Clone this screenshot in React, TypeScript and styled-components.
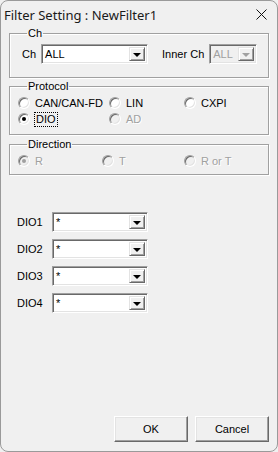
import React from "react";
import styled, { createGlobalStyle, css } from "styled-components";

const Global = createGlobalStyle`
  html, body { margin: 0; padding: 0; background: #f0f0f0; }
  body { font-family: "Liberation Sans", Arial, sans-serif; font-size: 11px; color: #000; }
  * { box-sizing: border-box; }
`;

const Window = styled.div`
  width: 278px;
  height: 452px;
  border: 1px solid #9a9a9a;
  border-radius: 8px;
  background: #f0f0f0;
  display: flex;
  flex-direction: column;
  overflow: hidden;
`;

const TitleBar = styled.div`
  height: 26px;
  display: flex;
  align-items: center;
  justify-content: space-between;
  padding: 0 6px 0 3px;
  flex: none;
`;

const Title = styled.span`
  font-family: "Noto Sans", "Open Sans", sans-serif;
  font-size: 13px;
  color: #1a1a1a;
  padding-top: 2px;
`;

const CloseBtn = styled.span`
  display: flex;
  width: 20px;
  justify-content: center;
`;

const Body = styled.div`
  flex: 1;
  display: flex;
  flex-direction: column;
  padding: 0 8px;
`;

const Group = styled.fieldset<{ $mt: number; $pt: number; $pb: number }>`
  margin: ${(p) => p.$mt}px 0 0 0;
  padding: ${(p) => p.$pt}px 8px ${(p) => p.$pb}px 12px;
  border: 1px solid #a0a0a0;
  box-shadow: inset 1px 1px 0 #fff, 1px 1px 0 #fff;
  min-width: 0;
`;

const Legend = styled.legend`
  padding: 0 1px;
  margin-left: 5px;
  line-height: 12px;
  font-size: 11px;
`;

const Row = styled.div`
  display: flex;
  align-items: center;
`;

const Label = styled.span<{ $w?: number; $ml?: number }>`
  ${(p) => p.$w && css`width: ${p.$w}px;`}
  margin-left: ${(p) => p.$ml ?? 0}px;
  margin-right: 5px;
  white-space: nowrap;
`;

const ComboBox = styled.div<{ $w: number; $disabled?: boolean }>`
  width: ${(p) => p.$w}px;
  height: 20px;
  display: flex;
  align-items: stretch;
  border-style: solid;
  border-width: 1px;
  border-color: #a0a0a0 #fff #fff #a0a0a0;
  box-shadow: inset 1px 1px 0 #696969, inset -1px -1px 0 #e3e3e3;
  background: ${(p) => (p.$disabled ? "#f0f0f0" : "#fff")};
  padding: 2px;
`;

const ComboText = styled.span<{ $disabled?: boolean }>`
  flex: 1;
  padding-left: 1px;
  line-height: 14px;
  color: ${(p) => (p.$disabled ? "#a0a0a0" : "#000")};
`;

const DropBtn = styled.span`
  width: 16px;
  display: flex;
  align-items: center;
  justify-content: center;
  background: #f0f0f0;
  border-style: solid;
  border-width: 1px;
  border-color: #e3e3e3 #696969 #696969 #e3e3e3;
  box-shadow: inset 1px 1px 0 #fff, inset -1px -1px 0 #a0a0a0;
`;

const Arrow = styled.span<{ $disabled?: boolean }>`
  width: 0;
  height: 0;
  border-left: 4px solid transparent;
  border-right: 4px solid transparent;
  border-top: 4px solid ${(p) => (p.$disabled ? "#a0a0a0" : "#000")};
  margin-top: 1px;
`;

const RadioGrid = styled.div<{ $cols: string }>`
  display: grid;
  grid-template-columns: ${(p) => p.$cols};
  grid-auto-rows: 16px;
  margin-left: -4px;
`;

const RadioItem = styled.label<{ $disabled?: boolean }>`
  display: flex;
  align-items: center;
  gap: 5px;
  white-space: nowrap;
  color: ${(p) => (p.$disabled ? "#a0a0a0" : "#000")};
  ${(p) => p.$disabled && css`text-shadow: 1px 1px 0 #fff;`}
`;

const RadioCircle = styled.span<{ $checked?: boolean; $disabled?: boolean }>`
  width: 12px;
  height: 12px;
  border-radius: 50%;
  border: 1px solid;
  border-color: #a0a0a0 #fff #fff #a0a0a0;
  box-shadow: inset 1px 1px 0 #696969, inset -1px -1px 0 #e3e3e3;
  background: ${(p) => (p.$disabled ? "#f0f0f0" : "#fff")};
  display: flex;
  align-items: center;
  justify-content: center;
  flex: none;
  &::after {
    content: "";
    width: 4px;
    height: 4px;
    border-radius: 50%;
    background: ${(p) => (p.$disabled ? "#a0a0a0" : "#000")};
    display: ${(p) => (p.$checked ? "block" : "none")};
  }
`;

const FocusText = styled.span`
  outline: 1px dotted #000;
  outline-offset: 0;
  padding: 0 1px;
  line-height: 13px;
`;

const DioList = styled.div`
  display: flex;
  flex-direction: column;
  gap: 7px;
  margin-top: 37px;
  padding-left: 8px;
`;

const Footer = styled.div`
  margin-top: auto;
  display: flex;
  justify-content: flex-end;
  gap: 7px;
  padding-bottom: 9px;
`;

const Button = styled.button`
  width: 74px;
  height: 26px;
  font-family: "Liberation Sans", Arial, sans-serif;
  font-size: 11px;
  color: #000;
  background: #f0f0f0;
  border-style: solid;
  border-width: 1px;
  border-color: #fff #696969 #696969 #fff;
  box-shadow: inset -1px -1px 0 #a0a0a0, inset 1px 1px 0 #e3e3e3;
  padding: 0;
`;

const Combo = ({ w, value, disabled }: { w: number; value: string; disabled?: boolean }) => (
  <ComboBox $w={w} $disabled={disabled}>
    <ComboText $disabled={disabled}>{value}</ComboText>
    <DropBtn>
      <Arrow $disabled={disabled} />
    </DropBtn>
  </ComboBox>
);

const Radio = ({
  label,
  checked,
  disabled,
  focus,
}: {
  label: string;
  checked?: boolean;
  disabled?: boolean;
  focus?: boolean;
}) => (
  <RadioItem $disabled={disabled}>
    <RadioCircle $checked={checked} $disabled={disabled} />
    {focus ? <FocusText>{label}</FocusText> : <span>{label}</span>}
  </RadioItem>
);

export default function App() {
  return (
    <>
      <Global />
      <Window>
        <TitleBar>
          <Title>Filter Setting : NewFilter1</Title>
          <CloseBtn>
            <svg width="11" height="11" viewBox="0 0 11 11">
              <path d="M0.5 0.5 L10.5 10.5 M10.5 0.5 L0.5 10.5" stroke="#111" strokeWidth="1" />
            </svg>
          </CloseBtn>
        </TitleBar>
        <Body>
          <Group $mt={0} $pt={5} $pb={13}>
            <Legend>Ch</Legend>
            <Row>
              <Label>Ch</Label>
              <Combo w={107} value="ALL" />
              <Label $ml={14}>Inner Ch</Label>
              <Combo w={48} value="ALL" disabled />
            </Row>
          </Group>
          <Group $mt={2} $pt={3} $pb={7}>
            <Legend>Protocol</Legend>
            <RadioGrid $cols="91px 75px 1fr">
              <Radio label="CAN/CAN-FD" />
              <Radio label="LIN" />
              <Radio label="CXPI" />
              <Radio label="DIO" checked focus />
              <Radio label="AD" disabled />
            </RadioGrid>
          </Group>
          <Group $mt={3} $pt={3} $pb={5}>
            <Legend>Direction</Legend>
            <RadioGrid $cols="84px 82px 1fr">
              <Radio label="R" checked disabled />
              <Radio label="T" disabled />
              <Radio label="R or T" disabled />
            </RadioGrid>
          </Group>
          <DioList>
            {["DIO1", "DIO2", "DIO3", "DIO4"].map((d) => (
              <Row key={d}>
                <Label $w={30}>{d}</Label>
                <Combo w={96} value="*" />
              </Row>
            ))}
          </DioList>
          <Footer>
            <Button>OK</Button>
            <Button>Cancel</Button>
          </Footer>
        </Body>
      </Window>
    </>
  );
}
